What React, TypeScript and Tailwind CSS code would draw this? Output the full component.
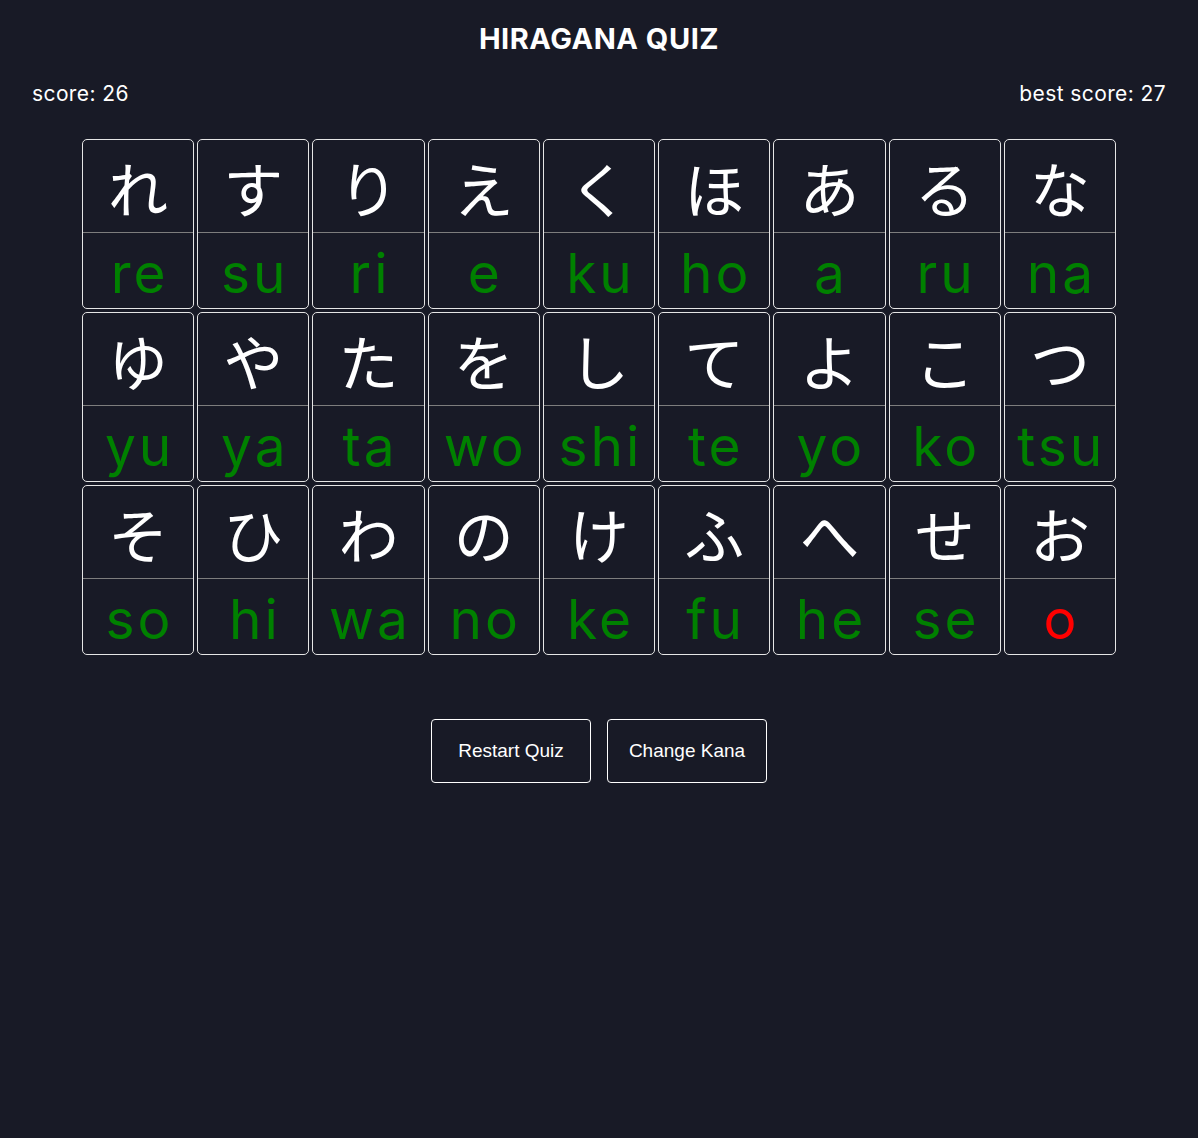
const rows: [string, string, boolean?][][] = [
  [["れ", "re"], ["す", "su"], ["り", "ri"], ["え", "e"], ["く", "ku"], ["ほ", "ho"], ["あ", "a"], ["る", "ru"], ["な", "na"]],
  [["ゆ", "yu"], ["や", "ya"], ["た", "ta"], ["を", "wo"], ["し", "shi"], ["て", "te"], ["よ", "yo"], ["こ", "ko"], ["つ", "tsu"]],
  [["そ", "so"], ["ひ", "hi"], ["わ", "wa"], ["の", "no"], ["け", "ke"], ["ふ", "fu"], ["へ", "he"], ["せ", "se"], ["お", "o", true]],
];

function KanaCard({ kana, romaji, wrong }: { kana: string; romaji: string; wrong?: boolean }) {
  return (
    <div className="flex h-[170px] flex-col overflow-hidden rounded-[5px] border border-[#e5e5e5]">
      <div className="flex h-[93px] shrink-0 items-center justify-center border-b border-[#7d7d7d] pt-[2px] text-[60px] leading-none text-white [font-family:'Noto_Sans_CJK_JP',sans-serif]">
        {kana}
      </div>
      <div
        className={
          "flex flex-1 items-center justify-center whitespace-nowrap pt-[6px] pl-[3px] text-[55px] leading-none tracking-[3px] [font-family:Inter,sans-serif] " +
          (wrong ? "text-[#ff0000]" : "text-[#008000]")
        }
      >
        {romaji}
      </div>
    </div>
  );
}

export default function App() {
  return (
    <div className="min-h-[1138px] w-full bg-[#181a26] text-white">
      <h1 className="pt-[20px] text-center text-[29px] font-bold leading-[38px] tracking-[0.5px] [font-family:Inter,sans-serif]">
        HIRAGANA QUIZ
      </h1>
      <div className="mt-[20px] flex justify-between px-[32px] text-[21px] leading-[32px] tracking-[0.4px] [font-family:Inter,sans-serif]">
        <span>score: 26</span>
        <span>best score: 27</span>
      </div>
      <div className="mx-auto mt-[29px] grid w-[1034px] grid-cols-9 gap-[3px]">
        {rows.flat().map(([k, r, w], i) => (
          <KanaCard key={i} kana={k} romaji={r} wrong={w} />
        ))}
      </div>
      <div className="mt-[64px] flex justify-center gap-[16px] [font-family:'Liberation_Sans',Arial,sans-serif]">
        <button className="h-[64px] w-[160px] rounded-[4px] border border-white text-[19px] text-white">
          Restart Quiz
        </button>
        <button className="h-[64px] w-[160px] rounded-[4px] border border-white text-[19px] text-white">
          Change Kana
        </button>
      </div>
    </div>
  );
}
